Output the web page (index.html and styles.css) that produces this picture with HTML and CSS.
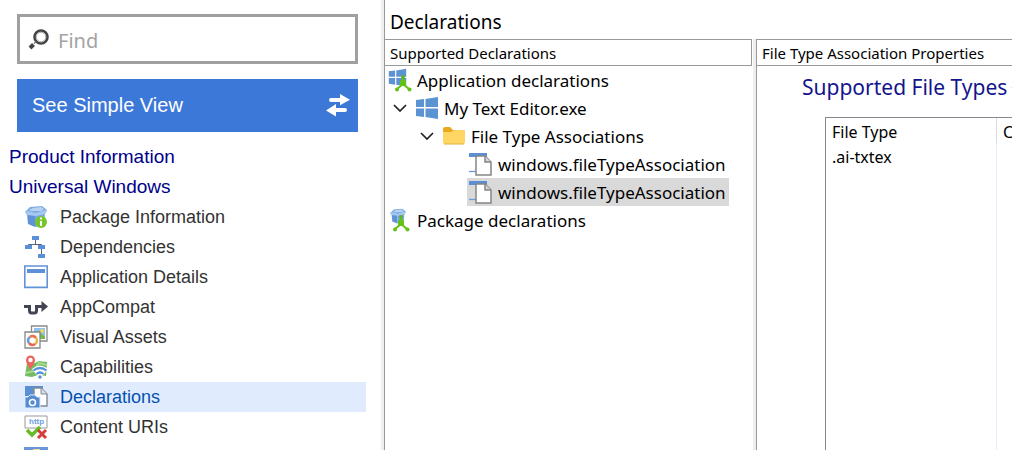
FILE: index.html
```html
<!DOCTYPE html>
<html lang="en">
<head>
<meta charset="utf-8">
<title>Declarations</title>
<link rel="stylesheet" href="styles.css">
</head>
<body>
<svg class="defs" aria-hidden="true">
  <symbol id="box" viewBox="0 0 24 24">
    <path d="M1 7l5-5 12-1 5 4-3 5H3z" fill="#7ba9e0"/>
    <path d="M5 5l4-2 8-1 3 2-3 2H7z" fill="#b9d4f3"/>
    <path d="M3 9l8 1v12l-7-3z" fill="#5f92d6"/>
    <path d="M11 10l10-2-1 12-9 2z" fill="#78a8e2"/>
    <path d="M1 7l3-1 8 2 9-3 2 1-2 3-9 2-9-1z" fill="#a6c8ef"/>
  </symbol>
  <symbol id="windows" viewBox="0 0 24 24">
    <path d="M1 4l8-1v8H1zM10.500 3L23 1v10H10.500zM1 12.500h8v8.500l-8-1zM10.500 12.500H23V23l-12.500-2z" fill="#5b93d3"/>
  </symbol>
  <symbol id="branch" viewBox="0 0 24 24">
    <path d="M15 9v7l-6 5M15 16l6 5" stroke="#62c314" stroke-width="2" fill="none"/>
    <circle cx="15" cy="9" r="2" fill="#62b320"/><path d="M12 18v-5l3-3 3 3v5z" fill="#62c314"/>
    <circle cx="9" cy="21.500" r="2" fill="#62c314"/><circle cx="21.500" cy="21.500" r="2" fill="#62c314"/>
  </symbol>
  <symbol id="document" viewBox="0 0 24 24">
    <path d="M0 1h18v4H0z" fill="#5b8fd4"/><path d="M0 19.500h7" stroke="#6a9ad8" stroke-width="1.300"/>
    <path d="M7 4h9l6 6v13H7z" fill="#fff" stroke="#858585" stroke-width="1.500"/>
    <path d="M16 4v6h6" fill="#d5d5d5" stroke="#858585" stroke-width="1.500"/>
  </symbol>
  <symbol id="chevron" viewBox="0 0 14 8">
    <path d="M1 1l6 6 6-6" fill="none" stroke="#222" stroke-width="1.700"/>
  </symbol>
</svg>
<div class="app">
  <aside class="sidebar">
    <label class="search">
      <svg class="search-icon" viewBox="0 0 22 22" aria-hidden="true">
        <circle cx="13" cy="9" r="6.500" fill="#fff" stroke="#444" stroke-width="2.600"/>
        <circle cx="13" cy="9" r="4.800" fill="none" stroke="#aaa" stroke-width="1"/>
        <path d="M8 13.500l-2 2" stroke="#777" stroke-width="1.500"/>
        <path d="M5.500 16.500L2 20" stroke="#444" stroke-width="4"/>
      </svg>
      <input type="text" placeholder="Find" aria-label="Find">
    </label>
    <button class="view-button" type="button">
      <span>See Simple View</span>
      <svg class="swap-icon" viewBox="0 0 24 24" aria-hidden="true">
        <path d="M5 4h9V0l10 5.700-10 5.600V8H5a2 2 0 0 1 0-4zM19 14h-9v-4L0 16.500l10 6V18h9a2 2 0 0 0 0-4z" fill="#fff"/>
      </svg>
    </button>
    <nav class="nav">
      <a class="section" href="#product">Product Information</a>
      <a class="section" href="#windows-section">Universal Windows</a>
      <a class="item" href="#package">
        <svg class="icon" viewBox="0 0 24 24"><use href="#box"/><circle cx="17" cy="17" r="6" fill="#76c52c"/><path d="M17 16v5M17 12.500v2" stroke="#fff" stroke-width="2"/></svg>
        Package Information</a>
      <a class="item" href="#dependencies">
        <svg class="icon" viewBox="0 0 24 24"><path d="M11.500 5v5M4.500 12V9.500h13V12M17.500 14v6" stroke="#596277" fill="none"/><path d="M8 1h7v4H8zM1 10h7v4H1zM14 10h7v4h-7zM14 19h7v4h-7z" fill="#5990d6"/></svg>
        Dependencies</a>
      <a class="item" href="#details">
        <svg class="icon" viewBox="0 0 24 24"><path d="M.8 1h22.400v21.400H.8z" fill="#fff" stroke="#6293d7" stroke-width="1.600"/><path d="M3 4h18v4H3z" fill="#5e91d6"/></svg>
        Application Details</a>
      <a class="item" href="#compat">
        <svg class="icon" viewBox="0 0 24 24"><path d="M0 11.500h5.500v4q0 2.500 2 2.500h3q2 0 2-2.500v-4H19" fill="none" stroke="#414555" stroke-width="3"/><path d="M17.500 6l6.500 5.500-6.500 5.500z" fill="#414555"/></svg>
        AppCompat</a>
      <a class="item" href="#assets">
        <svg class="icon" viewBox="0 0 24 24"><path d="M7.500 1h15.500v15H7.500z" fill="#fff" stroke="#8b8b8b" stroke-width="1.300"/><path d="M10 3h11v11H10z" fill="#8fc0ee"/><path d="M10 11l5-5 6 6v2H10z" fill="#75b944"/><circle cx="18" cy="6" r="2" fill="#f4d65a"/><path d="M1 7h15v16H1z" fill="#fff" stroke="#888" stroke-width="1.300"/><g fill="none" stroke-width="2.600"><path d="M5 18a4 4 0 0 1 1-6" stroke="#679be0"/><path d="M6 12a4 4 0 0 1 6 1" stroke="#ed7047"/><path d="M12 13a4 4 0 0 1-1 6" stroke="#e8b64e"/><path d="M11 19a4 4 0 0 1-6-1" stroke="#df6850"/></g></svg>
        Visual Assets</a>
      <a class="item" href="#capabilities">
        <svg class="icon" viewBox="0 0 24 24"><path d="M3 8l6 1 6-3 8 1-1 14-8-1-6 2-7-1z" fill="#72bd62"/><path d="M2 18l8-2 5-8 8 2" stroke="#a6d993" stroke-width="2" fill="none"/><path d="M6.500 15C4 10 2 8 2 5a4.500 4.500 0 0 1 9 0c0 3-2 5-4.500 10z" fill="#ec655e"/><circle cx="6.500" cy="5" r="2.200" fill="#fff"/><path d="M8 14q8-7 16 0l-8 10z" fill="#fff"/><g fill="none" stroke="#568fdb" stroke-width="2.200"><path d="M9.500 15.500q6.500-5 13 0M12.500 19q3.500-3 7 0"/></g><circle cx="16" cy="22" r="1.700" fill="#568fdb"/></svg>
        Capabilities</a>
      <a class="item current" href="#declarations" aria-current="page">
        <svg class="icon" viewBox="0 0 24 24"><path d="M1 1h18v10H1z" fill="#5b8fd4"/><path d="M10 3h7l6 6v12H10z" fill="#fff" stroke="#848b94" stroke-width="1.400"/><path d="M17 3v6h6" fill="#d8dde5" stroke="#848b94"/><path d="M1 12h3l2-2h5l2 2h3v11H1z" fill="#568bd2" stroke="#dfecfd"/><circle cx="8.500" cy="17.500" r="3" fill="#568bd2" stroke="#fff" stroke-width="1.600"/></svg>
        Declarations</a>
      <a class="item" href="#uris">
        <svg class="icon" viewBox="0 0 24 24"><path d="M1 1h22v12H1z" fill="#fff" stroke="#999"/><text class="icon-text" x="5" y="9">http</text><path d="M3 15l5 5 8-8" fill="none" stroke="#65bd25" stroke-width="3.500"/><path d="M14 15l8 8M22 15l-8 8" stroke="#d63c3c" stroke-width="3"/></svg>
        Content URIs</a>
      <a class="item" href="#more" aria-label="More">
        <svg class="icon" viewBox="0 0 24 24"><path d="M1 3h22v21H1z" fill="#e6f0fb" stroke="#6b9adb" stroke-width="2"/><path d="M1 2h22v3H1z" fill="#6797da"/><path d="M9 4h7v6H9z" fill="#f7d995"/></svg></a>
    </nav>
  </aside>
  <main class="main">
    <h1 class="title">Declarations</h1>
    <div class="panels">
      <section class="tree-panel">
        <h2 class="panel-title">Supported Declarations</h2>
        <ul class="tree">
          <li><span class="node"><svg class="icon" viewBox="0 0 24 24"><use href="#windows" width="19" height="19"/><use href="#branch"/></svg>Application declarations</span>
            <ul>
              <li><button class="toggle" type="button" aria-label="Collapse My Text Editor.exe"><svg class="chevron"><use href="#chevron"/></svg></button><span class="node"><svg class="icon"><use href="#windows"/></svg>My Text Editor.exe</span>
                <ul>
                  <li><button class="toggle" type="button" aria-label="Collapse File Type Associations"><svg class="chevron"><use href="#chevron"/></svg></button><span class="node"><svg class="icon" viewBox="0 0 24 24"><path d="M1 5q0-2 2-2h5l3 3h10q2 0 2 2v10H1z" fill="#e8a91e"/><path d="M1 8h8l3-2h9q2 0 2 2v10q0 2-2 2H3q-2 0-2-2z" fill="#ffd563"/><path d="M2 20h20" stroke="#e2b23b"/></svg>File Type Associations</span>
                    <ul>
                      <li><span class="node"><svg class="icon"><use href="#document"/></svg>windows.fileTypeAssociation</span></li>
                      <li><span class="node selected"><svg class="icon"><use href="#document"/></svg>windows.fileTypeAssociation</span></li>
                    </ul>
                  </li>
                </ul>
              </li>
            </ul>
          </li>
          <li><span class="node"><svg class="icon" viewBox="0 0 24 24"><use href="#box" x="1" width="18" height="17"/><use href="#branch" x="-2"/></svg>Package declarations</span></li>
        </ul>
      </section>
      <section class="properties">
        <h2 class="panel-title">File Type Association Properties</h2>
        <h3 class="group-title">Supported File Types</h3>
        <div class="table-frame">
          <table class="types">
            <thead><tr><th class="type-column">File Type</th><th>C</th></tr></thead>
            <tbody><tr><td>.ai-txtex</td><td></td></tr><tr class="filler"><td></td><td></td></tr></tbody>
          </table>
        </div>
      </section>
    </div>
  </main>
</div>
</body>
</html>
```

FILE: styles.css
```css
* { box-sizing: border-box; }
body {
  margin: 0;
  overflow: hidden;
  background: #fff;
  color: #000;
  font-family: "Noto Sans", "Open Sans", sans-serif;
  font-size: 17px;
}
h1, h2, h3 { margin: 0; font-weight: 400; }
button { font: inherit; border: 0; padding: 0; background: none; }
.defs { display: none; }
.icon { width: 24px; height: 24px; flex: none; }
.app { display: flex; height: 100vh; }

.sidebar {
  flex: 0 0 384px;
  overflow: hidden;
  padding-top: 14px;
  border-right: 3px solid #eee;
  font-family: "Liberation Sans", Arial, sans-serif;
}
.search {
  display: flex;
  align-items: center;
  height: 50px;
  margin: 0 23px 15px 17px;
  padding-left: 8px;
  border: 3px solid #a0a0a0;
}
.search-icon { width: 22px; height: 22px; flex: none; }
.search input {
  flex: 1;
  min-width: 0;
  margin-left: 8px;
  padding: 2px 0 0;
  border: 0;
  outline: 0;
  background: none;
  font: 20px "Noto Sans", "Open Sans", sans-serif;
}
.search input::placeholder { color: #a3a3a3; opacity: 1; }
.view-button {
  display: flex;
  align-items: center;
  justify-content: space-between;
  width: calc(100% - 40px);
  height: 53px;
  margin: 0 23px 10px 17px;
  padding: 0 8px 0 15px;
  background: #3c78d8;
  color: #fff;
  font-size: 20px;
}
.swap-icon { width: 24px; height: 24px; }
.nav { margin: 0 15px 0 9px; }
.nav a {
  display: flex;
  align-items: center;
  height: 30px;
  color: #333;
  text-decoration: none;
  white-space: nowrap;
}
.nav .section { color: #00008b; font-size: 19px; }
.nav .item { gap: 12px; padding-left: 15px; font-size: 18px; }
.nav .current { background: #e0ecfe; color: #0550ae; }
.icon-text { font: bold 8px "Liberation Sans", Arial, sans-serif; fill: #6d9ce0; }

.main {
  display: flex;
  flex: 1;
  flex-direction: column;
  min-width: 0;
  border-left: 1px solid #999;
}
.title { height: 39px; padding: 6px 5px 0; font-size: 19px; line-height: 32px; }
.panels { display: flex; flex: 1; min-height: 0; }
.panel-title {
  height: 27px;
  padding-left: 5px;
  border: 1px solid #999;
  border-left: 0;
  font-size: 15px;
  line-height: 27px;
  white-space: nowrap;
}
.tree-panel { flex: 0 0 367px; }
.tree, .tree ul { margin: 0; padding: 0; list-style: none; }
.tree { padding-left: 1px; }
.tree ul { padding-left: 27px; }
.tree li { position: relative; }
.node {
  display: inline-flex;
  align-items: center;
  gap: 5px;
  height: 28px;
  padding: 0 3px 0 2px;
  vertical-align: top;
  white-space: nowrap;
}
.selected { background: #d9d9d9; }
.toggle {
  position: absolute;
  left: -25px;
  display: grid;
  place-items: center;
  width: 24px;
  height: 28px;
}
.chevron { width: 14px; height: 8px; }
.properties {
  display: flex;
  flex: 1;
  flex-direction: column;
  min-width: 0;
  overflow: hidden;
  margin-left: 1px;
  border-left: 3px solid #eee;
}
.properties > * { border-left: 1px solid #999; }
.properties .panel-title { border-right: 0; }
.group-title {
  display: flex;
  align-items: center;
  gap: 4px;
  padding: 5px 0 14px 45px;
  color: #14148c;
  font-size: 21px;
  line-height: 32px;
  white-space: nowrap;
}
.group-title::after { flex: 1; height: 1px; background: #ddd; content: ""; }
.table-frame { flex: 1; padding-left: 68px; }
.types {
  width: 100%;
  height: 100%;
  border-collapse: separate;
  border-spacing: 0;
  table-layout: fixed;
  border: solid #828790;
  border-width: 1px 0 0 1px;
  font-size: 16px;
}
.types th, .types td { height: 25px; padding: 2px 0 0 6px; line-height: 22px; text-align: left; font-weight: 400; white-space: nowrap; }
.types .type-column { width: 171px; }
.types th:first-child { border-right: 1px solid #ddd; }
.types td:first-child { border-right: 1px solid #e5effc; }
.types .filler td { height: auto; }
```
